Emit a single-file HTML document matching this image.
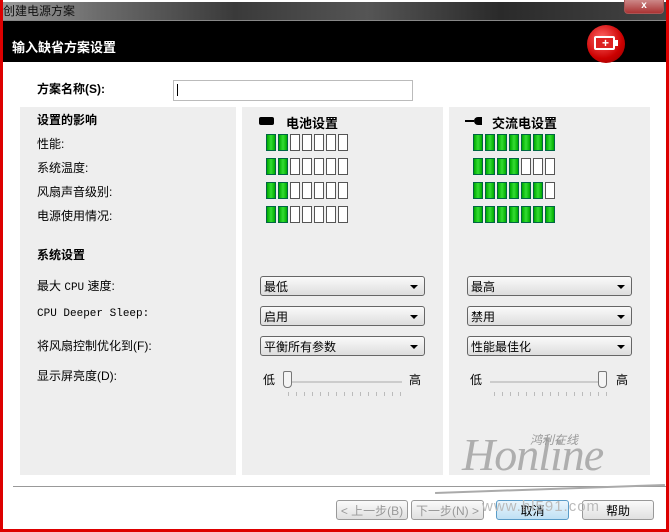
<!DOCTYPE html><html><head><meta charset="utf-8"><style>
*{margin:0;padding:0;box-sizing:border-box}
body{width:669px;height:532px;overflow:hidden;background:#d00;font-family:"Liberation Sans","Noto Sans CJK SC","WenQuanYi Zen Hei",sans-serif;font-size:12px;color:#000;position:relative}
.a{position:absolute}
#win{left:3px;top:0;width:663px;height:529px;background:#fff}
#tb{left:3px;top:2px;width:663px;height:19px;background:linear-gradient(90deg,#9a9a9a 0,#6a6a6a 15%,#3a3a3a 35%,#555 55%,#2a2a2a 75%,#444 100%);border-bottom:1px solid #888}
#hd{left:3px;top:21px;width:663px;height:41px;background:#000}
.p{background:#eee}
.bar{position:absolute;width:10px;height:17px;border:1px solid #555;background:#fff}
.g{background:linear-gradient(90deg,#0a0 0,#3d3 50%,#0a0 100%);border-color:#064}
.dd{position:absolute;height:20px;border:1px solid #666;border-radius:3px;background:linear-gradient(#fafafa,#ddd);padding:1px 0 0 3px;font-size:12px}
.dd:after{content:"";position:absolute;right:6px;top:8px;border:4px solid transparent;border-top:4px solid #000;border-bottom:0}
.btn{position:absolute;top:500px;height:20px;border:1px solid #999;border-radius:3px;background:linear-gradient(#fafafa,#e0e0e0);text-align:center;font-size:12px;padding-top:1px}
.t{position:absolute;font-size:12px}
.b{font-weight:bold}
</style></head><body>
<div class="a" id="win"></div>
<div class="a" id="tb"></div>
<div class="a" style="left:3px;top:2px;color:#111;font-size:12px">创建电源方案</div>
<div class="a" style="left:624px;top:0;width:40px;height:14px;border:1px solid #a55;border-top:0;border-radius:0 0 4px 4px;background:linear-gradient(#c88,#a33);color:#fff;text-align:center;font-size:10px;font-weight:bold;line-height:12px">x</div>
<div class="a" id="hd"></div>
<div class="a b" style="left:12px;top:37px;color:#fff;font-size:13px">输入缺省方案设置</div>
<div class="a" style="left:587px;top:25px;width:38px;height:38px;border-radius:50%;background:radial-gradient(circle at 40% 35%,#f66,#c00 60%,#800)"></div>
<div class="a" style="left:594px;top:36px;width:21px;height:14px;border:2px solid #fff;border-radius:2px;background:#d22"></div>
<div class="a" style="left:615px;top:40px;width:3px;height:6px;background:#fff"></div>
<div class="a" style="left:602px;top:37px;color:#fff;font-size:12px;font-weight:bold;line-height:12px">+</div>
<div class="t b" style="left:37px;top:80px;font-size:12px">方案名称(S):</div>
<div class="a" style="left:173px;top:80px;width:240px;height:21px;border:1px solid #bbb"></div>
<div class="a" style="left:177px;top:84px;width:1px;height:12px;background:#000"></div>
<div class="a p" style="left:20px;top:107px;width:216px;height:368px"></div>
<div class="a p" style="left:242px;top:107px;width:201px;height:368px"></div>
<div class="a p" style="left:449px;top:107px;width:201px;height:368px"></div>
<div class="t b" style="left:37px;top:111px">设置的影响</div>
<div class="t" style="left:37px;top:135px">性能:</div>
<div class="t" style="left:37px;top:159px">系统温度:</div>
<div class="t" style="left:37px;top:183px">风扇声音级别:</div>
<div class="t" style="left:37px;top:207px">电源使用情况:</div>
<div class="t b" style="left:37px;top:246px">系统设置</div>
<div class="t" style="left:37px;top:277px">最大 <span style="font-family:'Liberation Mono',monospace;font-size:11px">CPU</span> 速度:</div>
<div class="t" style="left:37px;top:308px;font-family:'Liberation Mono',monospace;font-size:11px">CPU Deeper Sleep:</div>
<div class="t" style="left:37px;top:337px">将风扇控制优化到(F):</div>
<div class="t" style="left:37px;top:367px">显示屏亮度(D):</div>
<div class="a" style="left:259px;top:117px;width:15px;height:8px;background:#000;border-radius:2px"></div>
<div class="t b" style="left:286px;top:113px;font-size:13px">电池设置</div>
<div class="a" style="left:465px;top:120px;width:9px;height:2px;background:#000"></div>
<div class="a" style="left:474px;top:117px;width:8px;height:8px;background:#000;border-radius:4px 0 0 4px"></div>
<div class="t b" style="left:492px;top:113px;font-size:13px">交流电设置</div>
<div class="dd" style="left:260px;top:276px;width:165px">最低</div>
<div class="dd" style="left:260px;top:306px;width:165px">启用</div>
<div class="dd" style="left:260px;top:336px;width:165px">平衡所有参数</div>
<div class="dd" style="left:467px;top:276px;width:165px">最高</div>
<div class="dd" style="left:467px;top:306px;width:165px">禁用</div>
<div class="dd" style="left:467px;top:336px;width:165px">性能最佳化</div>
<div class="t" style="left:263px;top:371px">低</div><div class="t" style="left:409px;top:371px">高</div>
<div class="a" style="left:290px;top:381px;width:112px;height:2px;background:#ccc"></div>
<div class="a" style="left:283px;top:371px;width:9px;height:17px;border:1px solid #777;border-radius:2px 2px 4px 4px;background:#f4f4f4"></div>
<div class="t" style="left:470px;top:371px">低</div><div class="t" style="left:616px;top:371px">高</div>
<div class="a" style="left:490px;top:381px;width:112px;height:2px;background:#ccc"></div>
<div class="a" style="left:598px;top:371px;width:9px;height:17px;border:1px solid #777;border-radius:2px 2px 4px 4px;background:#f4f4f4"></div>
<div class="a" style="left:288px;top:392px;width:118px;height:4px;background:repeating-linear-gradient(90deg,#bbb 0 1px,transparent 1px 8px)"></div>
<div class="a" style="left:494px;top:392px;width:118px;height:4px;background:repeating-linear-gradient(90deg,#bbb 0 1px,transparent 1px 8px)"></div>
<div class="a" style="left:13px;top:486px;width:653px;height:1px;background:#999"></div>
<div class="btn" style="left:336px;width:72px;color:#999">&lt; 上一步(B)</div>
<div class="btn" style="left:411px;width:73px;color:#999">下一步(N) &gt;</div>
<div class="btn" style="left:496px;width:73px;border-color:#5a9cc8;background:linear-gradient(#eaf6fd,#bfe0f4)">取消</div>
<div class="btn" style="left:582px;width:72px">帮助</div>
<div class="a" style="left:462px;top:428px;font-family:'Liberation Serif',serif;font-style:italic;font-size:46px;color:#999;opacity:.75;letter-spacing:-1px">Honline</div>
<div class="a" style="left:530px;top:431px;font-size:12px;color:#999;font-style:italic">鸿利在线</div>
<div class="a" style="left:435px;top:488px;width:230px;height:2px;background:#aaa;transform:rotate(-2deg)"></div>
<div class="a" style="left:482px;top:498px;font-size:15px;color:#bbb;letter-spacing:1px">www.hl591.com</div>
<div class="bar g" style="left:266px;top:134px"></div><div class="bar g" style="left:278px;top:134px"></div><div class="bar" style="left:290px;top:134px"></div><div class="bar" style="left:302px;top:134px"></div><div class="bar" style="left:314px;top:134px"></div><div class="bar" style="left:326px;top:134px"></div><div class="bar" style="left:338px;top:134px"></div>
<div class="bar g" style="left:266px;top:158px"></div><div class="bar g" style="left:278px;top:158px"></div><div class="bar" style="left:290px;top:158px"></div><div class="bar" style="left:302px;top:158px"></div><div class="bar" style="left:314px;top:158px"></div><div class="bar" style="left:326px;top:158px"></div><div class="bar" style="left:338px;top:158px"></div>
<div class="bar g" style="left:266px;top:182px"></div><div class="bar g" style="left:278px;top:182px"></div><div class="bar" style="left:290px;top:182px"></div><div class="bar" style="left:302px;top:182px"></div><div class="bar" style="left:314px;top:182px"></div><div class="bar" style="left:326px;top:182px"></div><div class="bar" style="left:338px;top:182px"></div>
<div class="bar g" style="left:266px;top:206px"></div><div class="bar g" style="left:278px;top:206px"></div><div class="bar" style="left:290px;top:206px"></div><div class="bar" style="left:302px;top:206px"></div><div class="bar" style="left:314px;top:206px"></div><div class="bar" style="left:326px;top:206px"></div><div class="bar" style="left:338px;top:206px"></div>
<div class="bar g" style="left:473px;top:134px"></div><div class="bar g" style="left:485px;top:134px"></div><div class="bar g" style="left:497px;top:134px"></div><div class="bar g" style="left:509px;top:134px"></div><div class="bar g" style="left:521px;top:134px"></div><div class="bar g" style="left:533px;top:134px"></div><div class="bar g" style="left:545px;top:134px"></div>
<div class="bar g" style="left:473px;top:158px"></div><div class="bar g" style="left:485px;top:158px"></div><div class="bar g" style="left:497px;top:158px"></div><div class="bar g" style="left:509px;top:158px"></div><div class="bar" style="left:521px;top:158px"></div><div class="bar" style="left:533px;top:158px"></div><div class="bar" style="left:545px;top:158px"></div>
<div class="bar g" style="left:473px;top:182px"></div><div class="bar g" style="left:485px;top:182px"></div><div class="bar g" style="left:497px;top:182px"></div><div class="bar g" style="left:509px;top:182px"></div><div class="bar g" style="left:521px;top:182px"></div><div class="bar g" style="left:533px;top:182px"></div><div class="bar" style="left:545px;top:182px"></div>
<div class="bar g" style="left:473px;top:206px"></div><div class="bar g" style="left:485px;top:206px"></div><div class="bar g" style="left:497px;top:206px"></div><div class="bar g" style="left:509px;top:206px"></div><div class="bar g" style="left:521px;top:206px"></div><div class="bar g" style="left:533px;top:206px"></div><div class="bar g" style="left:545px;top:206px"></div>
</body></html>
